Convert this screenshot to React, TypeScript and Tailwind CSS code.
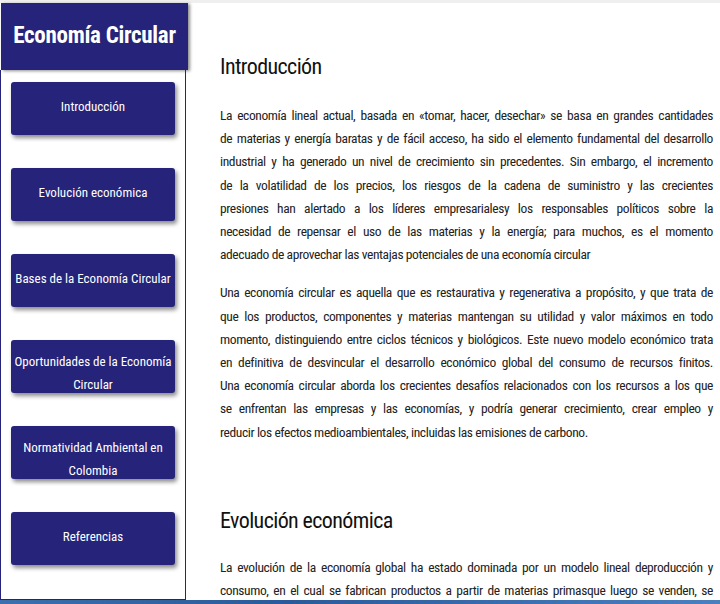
const navy = "bg-[#26237a]";

const menu = [
  ["Introducción"],
  ["Evolución económica"],
  ["Bases de la Economía Circular"],
  ["Oportunidades de la Economía", "Circular"],
  ["Normatividad Ambiental en", "Colombia"],
  ["Referencias"],
];

const intro1 = [
  "La economía lineal actual, basada en «tomar, hacer, desechar» se basa en grandes cantidades",
  "de materias y energía baratas y de fácil acceso, ha sido el elemento fundamental del desarrollo",
  "industrial y ha generado un nivel de crecimiento sin precedentes. Sin embargo, el incremento",
  "de la volatilidad de los precios, los riesgos de la cadena de suministro y las crecientes",
  "presiones han alertado a los líderes empresarialesy los responsables políticos sobre la",
  "necesidad de repensar el uso de las materias y la energía; para muchos, es el momento",
  "adecuado de aprovechar las ventajas potenciales de una economía circular",
];

const intro2 = [
  "Una economía circular es aquella que es restaurativa y regenerativa a propósito, y que trata de",
  "que los productos, componentes y materias mantengan su utilidad y valor máximos en todo",
  "momento, distinguiendo entre ciclos técnicos y biológicos. Este nuevo modelo económico trata",
  "en definitiva de desvincular el desarrollo económico global del consumo de recursos finitos.",
  "Una economía circular aborda los crecientes desafíos relacionados con los recursos a los que",
  "se enfrentan las empresas y las economías, y podría generar crecimiento, crear empleo y",
  "reducir los efectos medioambientales, incluidas las emisiones de carbono.",
];

const evol = [
  "La evolución de la economía global ha estado dominada por un modelo lineal deproducción y",
  "consumo, en el cual se fabrican productos a partir de materias primasque luego se venden, se",
];

function Para({ lines, last = true }: { lines: string[]; last?: boolean }) {
  return (
    <div className="text-[13.5px] leading-[23.2px] tracking-[-0.4px] text-[#222]">
      {lines.map((l, i) => (
        <span
          key={i}
          className={
            "block whitespace-nowrap " +
            (last && i === lines.length - 1 ? "text-left" : "text-justify [text-align-last:justify]")
          }
        >
          {l}
        </span>
      ))}
    </div>
  );
}

export default function App() {
  return (
    <div className="flex h-[604px] w-[720px] flex-col overflow-hidden bg-white font-['Roboto_Condensed',Roboto,sans-serif]">
      <div className="flex min-h-0 flex-1 border-t-[3px] border-[#efefef]">
        <aside className="flex w-[188px] shrink-0 flex-col">
          <div className={`ml-px flex h-[67px] items-center justify-center ${navy} shadow-[2px_1px_3px_rgba(0,0,0,0.45)]`}>
            <h1 className="text-[23px] font-bold tracking-[-0.3px] text-white">Economía Circular</h1>
          </div>
          <nav className="mr-[2px] flex flex-1 flex-col gap-[33px] border-x-[1.5px] border-b-[1.5px] border-[#26237a] px-[10px] pt-[12px]">
            {menu.map((m) => (
              <a
                key={m[0]}
                className={`flex h-[53px] flex-col items-center justify-center rounded-[3px] ${navy} text-center text-[13px] leading-[23px] text-white shadow-[2px_3px_4px_rgba(0,0,0,0.45)] ${
                  m.length > 1 ? "pt-[12px]" : "pb-[4px]"
                }`}
              >
                {m.map((t) => (
                  <span key={t} className="whitespace-nowrap">
                    {t}
                  </span>
                ))}
              </a>
            ))}
          </nav>
        </aside>
        <main className="flex-1 pl-[32px] pr-[7px] pt-[49px]">
          <h2 className="text-[22px] leading-[30px] tracking-[-0.6px] text-[#111]">Introducción</h2>
          <div className="mt-[22px] flex flex-col gap-[15px]">
            <Para lines={intro1} />
            <Para lines={intro2} />
          </div>
          <h2 className="mt-[62px] text-[22px] leading-[30px] tracking-[-0.6px] text-[#111]">Evolución económica</h2>
          <div className="mt-[20px]">
            <Para lines={evol} last={false} />
          </div>
        </main>
      </div>
      <div className="h-[4px] shrink-0 bg-[linear-gradient(90deg,#3b6fb0,#2a5a9a_40%,#4a80c0)]" />
    </div>
  );
}
